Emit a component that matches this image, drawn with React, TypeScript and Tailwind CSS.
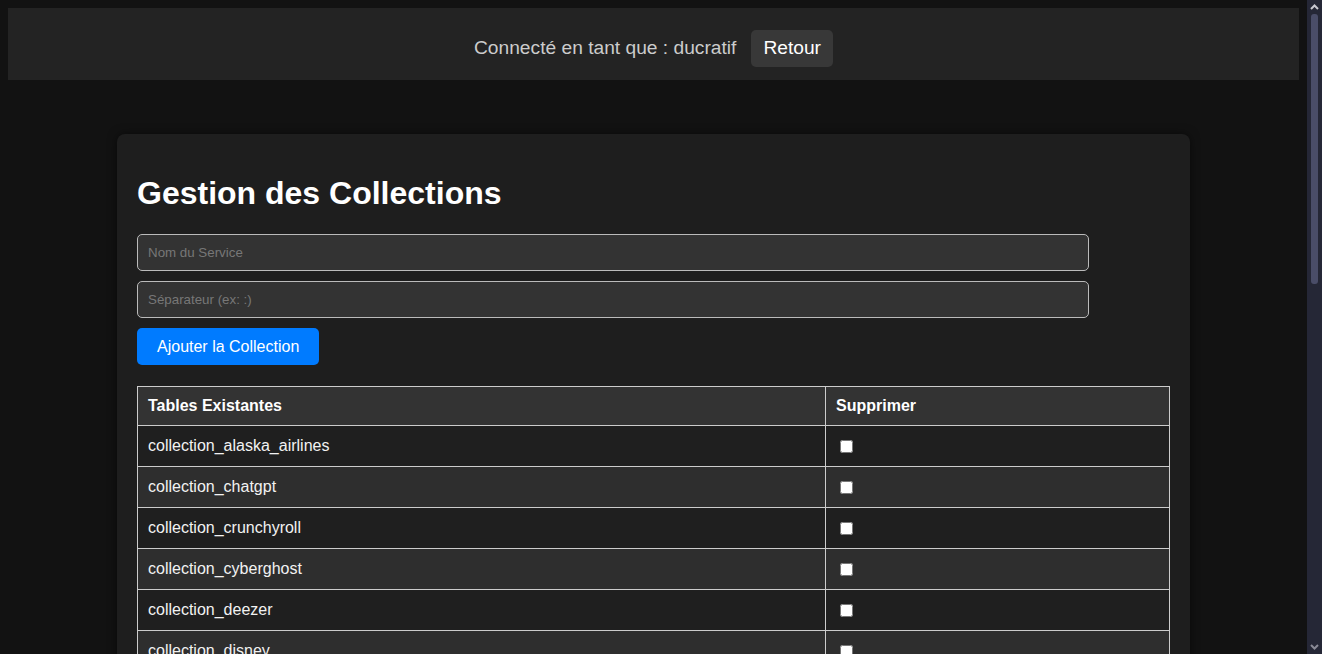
import React from "react";

const rows = [
  "collection_alaska_airlines",
  "collection_chatgpt",
  "collection_crunchyroll",
  "collection_cyberghost",
  "collection_deezer",
  "collection_disney",
  "collection_dropbox",
  "collection_expressvpn",
];

export default function App() {
  return (
    <div className="flex h-[654px] w-[1322px] overflow-hidden bg-[#121212] font-['Liberation_Sans',Arial,sans-serif]">
      <div className="flex-1 overflow-hidden p-2">
        <div className="flex items-center justify-center gap-[15px] bg-[#232323] pt-[22px] pb-[13px]">
          <span className="text-[19.2px] text-[#cccccc]">Connecté en tant que : ducratif</span>
          <button className="h-[37px] rounded-[5px] bg-[#383838] px-3 text-[19.2px] text-white">Retour</button>
        </div>
        <div className="ml-[109px] mt-[54px] w-[1073px] rounded-lg bg-[#1e1e1e] p-5 shadow-[0_0_10px_rgba(0,0,0,0.5)]">
          <h1 className="mt-[21px] mb-[22px] text-[32px] font-bold leading-[37px] text-white">Gestion des Collections</h1>
          <input
            className="mb-[10px] block h-[37px] w-[952px] rounded-[5px] border border-[#bbbbbb] bg-[#333333] px-[10px] text-[13.33px] text-white placeholder:text-[#777777] outline-none"
            placeholder="Nom du Service"
          />
          <input
            className="mb-[10px] block h-[37px] w-[952px] rounded-[5px] border border-[#bbbbbb] bg-[#333333] px-[10px] text-[13.33px] text-white placeholder:text-[#777777] outline-none"
            placeholder="Séparateur (ex: :)"
          />
          <button className="block h-[37px] rounded-[5px] bg-[#007bff] px-5 text-base text-white">Ajouter la Collection</button>
          <table className="mt-[21px] w-full border-collapse text-base text-[#f2f2f2]">
            <colgroup>
              <col className="w-[688px]" />
              <col />
            </colgroup>
            <thead>
              <tr className="h-[39px] bg-[#333333]">
                <th className="border border-[#cccccc] px-[10px] text-left font-bold text-white">Tables Existantes</th>
                <th className="border border-[#cccccc] px-[10px] text-left font-bold text-white">Supprimer</th>
              </tr>
            </thead>
            <tbody>
              {rows.map((r, i) => (
                <tr key={r} className={`h-[41px] ${i % 2 === 0 ? "bg-[#1f1f1f]" : "bg-[#2e2e2e]"}`}>
                  <td className="border border-[#cccccc] px-[10px]">{r}</td>
                  <td className="border border-[#cccccc] px-[10px]">
                    <input type="checkbox" className="ml-[4px] block h-[13px] w-[13px]" />
                  </td>
                </tr>
              ))}
            </tbody>
          </table>
        </div>
      </div>
      <div className="flex w-[15px] flex-col items-center bg-[#252736]">
        <svg width="15" height="14" viewBox="0 0 15 14" className="shrink-0">
          <path d="M4 9 L7.5 5.5 L11 9" stroke="#c8c8d0" strokeWidth="2" fill="none" />
        </svg>
        <div className="h-[270px] w-[7px] shrink-0 rounded-[3px] bg-[#4a4d68]" />
        <div className="flex-1" />
        <svg width="15" height="14" viewBox="0 0 15 14" className="shrink-0">
          <path d="M4 5 L7.5 8.5 L11 5" stroke="#8a8a96" strokeWidth="2" fill="none" />
        </svg>
      </div>
    </div>
  );
}
